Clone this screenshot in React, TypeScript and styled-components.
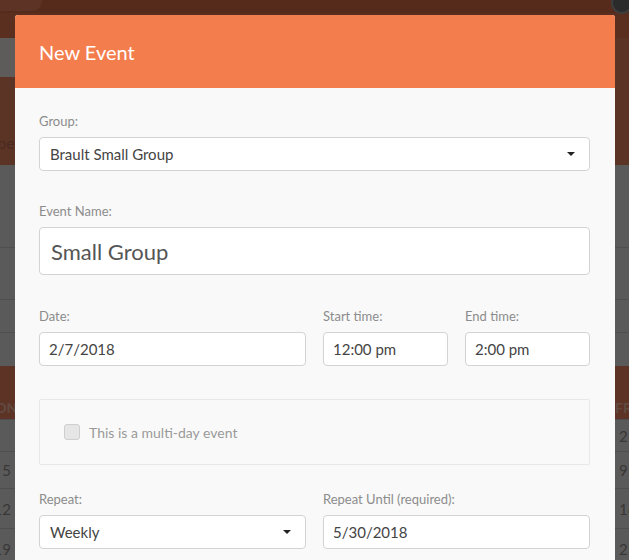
import React from 'react';
import styled, { createGlobalStyle } from 'styled-components';

const GlobalStyle = createGlobalStyle`
  html, body {
    margin: 0;
    padding: 0;
    background: #ffffff;
  }
  body {
    font-family: Lato, "Open Sans", sans-serif;
    overflow: hidden;
  }
`;

const weeks = [
  { height: 32, mon: '', fri: '2' },
  { height: 37, mon: '5', fri: '9' },
  { height: 40, mon: '12', fri: '16' },
  { height: 40, mon: '19', fri: '23' },
];

export default function App() {
  return (
    <>
      <GlobalStyle />
      <Page>
        <TopBar>
          <SearchPill />
          <Avatar />
        </TopBar>
        <NavBar />
        <SubHeader>
          <SideTab />
          <SectionTitle>Members</SectionTitle>
        </SubHeader>
        <ListArea>
          <ListRow $h={83} />
          <ListRow $h={52} />
          <ListRow $h={33} />
          <ListRow $h={33} $last />
        </ListArea>
        <CalendarHead>
          <DayName>MON</DayName>
          <DayName>FRI</DayName>
        </CalendarHead>
        {weeks.map((w, i) => (
          <WeekRow key={i} $h={w.height}>
            <MonCell>{w.mon}</MonCell>
            <FriCell>{w.fri}</FriCell>
          </WeekRow>
        ))}

        <Backdrop />

        <Modal>
          <ModalHeader>New Event</ModalHeader>
          <ModalBody>
            <Field>
              <Label>Group:</Label>
              <Select>
                Brault Small Group
                <Caret />
              </Select>
            </Field>

            <Field>
              <Label>Event Name:</Label>
              <Input $large readOnly value="Small Group" />
            </Field>

            <Row $cols="1fr 125px 125px" $mt={1}>
              <Field>
                <Label>Date:</Label>
                <Input readOnly value="2/7/2018" />
              </Field>
              <Field>
                <Label>Start time:</Label>
                <Input readOnly value="12:00 pm" />
              </Field>
              <Field>
                <Label>End time:</Label>
                <Input readOnly value="2:00 pm" />
              </Field>
            </Row>

            <MultiDayBox>
              <CheckBox />
              <CheckLabel>This is a multi-day event</CheckLabel>
            </MultiDayBox>

            <Row $cols="1fr 1fr">
              <Field>
                <Label>Repeat:</Label>
                <Select>
                  Weekly
                  <Caret />
                </Select>
              </Field>
              <Field>
                <Label>Repeat Until (required):</Label>
                <Input readOnly value="5/30/2018" />
              </Field>
            </Row>
          </ModalBody>
        </Modal>
      </Page>
    </>
  );
}

const ORANGE = '#f47d4e';

const Page = styled.div`
  position: relative;
  width: 629px;
  height: 560px;
  overflow: hidden;
  background: #e6e3e3;
`;

const TopBar = styled.div`
  height: 13px;
  background: #d86c48;
  display: flex;
  justify-content: space-between;
  align-items: flex-start;
`;

const SearchPill = styled.div`
  width: 52px;
  height: 11px;
  margin-left: -10px;
  border-radius: 0 0 10px 0;
  background: #e8805c;
`;

const Avatar = styled.div`
  width: 18px;
  height: 18px;
  margin-top: -8px;
  margin-right: -4px;
  border-radius: 50%;
  background: #6b6b6b;
  border: 2px solid #999;
`;

const NavBar = styled.div`
  height: 25px;
  background: #e2774f;
`;

const SubHeader = styled.div`
  height: 127px;
  background: #e6825c;
  display: flex;
  flex-direction: column;
`;

const SideTab = styled.div`
  width: 200px;
  height: 39px;
  background: #ebe5e3;
`;

const SectionTitle = styled.div`
  margin-top: 56px;
  margin-left: -39px;
  font-size: 16px;
  line-height: 20px;
  color: #b86a52;
`;

const ListArea = styled.div`
  background: #e4e1e1;
`;

const ListRow = styled.div<{ $h: number; $last?: boolean }>`
  height: ${(p) => p.$h}px;
  box-sizing: border-box;
  border-bottom: ${(p) => (p.$last ? 'none' : '1px solid #c9c5c5')};
`;

const CalendarHead = styled.div`
  height: 53px;
  box-sizing: border-box;
  background: #e6805a;
  display: flex;
  justify-content: space-between;
  align-items: flex-end;
  padding-bottom: 2px;
`;

const DayName = styled.div`
  font-size: 14px;
  font-weight: 700;
  line-height: 18px;
  color: #f2b9a2;
  &:first-child {
    margin-left: -18px;
  }
  &:last-child {
    width: 14px;
    padding-left: 3px;
    overflow: hidden;
  }
`;

const WeekRow = styled.div<{ $h: number }>`
  height: ${(p) => p.$h}px;
  box-sizing: border-box;
  border-top: 1px solid #c6c2c2;
  background: #e4e1e1;
  display: flex;
  justify-content: space-between;
  align-items: center;
  font-size: 15px;
  color: #8e8a8a;
`;

const MonCell = styled.div`
  width: 11px;
  text-align: right;
  direction: rtl;
  overflow: hidden;
  white-space: nowrap;
`;

const FriCell = styled.div`
  width: 10px;
  padding-left: 5px;
  overflow: hidden;
  white-space: nowrap;
`;

const Backdrop = styled.div`
  position: absolute;
  inset: 0;
  background: rgba(0, 0, 0, 0.6);
`;

const Modal = styled.div`
  position: absolute;
  top: 15px;
  left: 15px;
  width: 600px;
  height: 600px;
  background: #f9f9f9;
  border-radius: 3px 3px 0 0;
  overflow: hidden;
`;

const ModalHeader = styled.div`
  height: 73px;
  padding: 0 24px;
  display: flex;
  align-items: center;
  background: ${ORANGE};
  color: #ffffff;
  font-size: 20px;
  font-weight: 400;
`;

const ModalBody = styled.div`
  padding: 24px 25px 24px 24px;
  display: flex;
  flex-direction: column;
`;

const Field = styled.div`
  display: flex;
  flex-direction: column;
  margin-bottom: 31px;
`;

const Row = styled.div<{ $cols: string; $mt?: number }>`
  display: grid;
  grid-template-columns: ${(p) => p.$cols};
  column-gap: 17px;
  margin-top: ${(p) => p.$mt ?? 0}px;
`;

const Label = styled.label`
  font-size: 13px;
  line-height: 18px;
  color: #8c8c8c;
  margin-bottom: 7px;
`;

const Input = styled.input<{ $large?: boolean }>`
  box-sizing: border-box;
  width: 100%;
  height: ${(p) => (p.$large ? 48 : 34)}px;
  padding: 0 ${(p) => (p.$large ? 11 : 9)}px;
  border: 1px solid #d3d3d3;
  border-radius: 4px;
  background: #ffffff;
  font-family: Lato, "Open Sans", sans-serif;
  font-size: ${(p) => (p.$large ? 22 : 15)}px;
  color: ${(p) => (p.$large ? '#555' : '#444')};
  outline: none;
`;

const Select = styled.div`
  box-sizing: border-box;
  height: 34px;
  padding: 0 14px 0 10px;
  border: 1px solid #d3d3d3;
  border-radius: 4px;
  background: #ffffff;
  display: flex;
  align-items: center;
  justify-content: space-between;
  font-size: 15px;
  color: #444;
`;

const Caret = styled.span`
  width: 0;
  height: 0;
  border-left: 4px solid transparent;
  border-right: 4px solid transparent;
  border-top: 4px solid #222;
`;

const MultiDayBox = styled.div`
  box-sizing: border-box;
  height: 66px;
  margin-top: 2px;
  margin-bottom: 25px;
  padding: 0 24px;
  border: 1px solid #e8e8e8;
  border-radius: 2px;
  display: flex;
  align-items: center;
  gap: 9px;
`;

const CheckBox = styled.span`
  box-sizing: border-box;
  width: 16px;
  height: 16px;
  border: 1px solid #cfcfcf;
  border-radius: 3px;
  background: #e6e6e6;
`;

const CheckLabel = styled.span`
  font-size: 14px;
  color: #999;
`;
